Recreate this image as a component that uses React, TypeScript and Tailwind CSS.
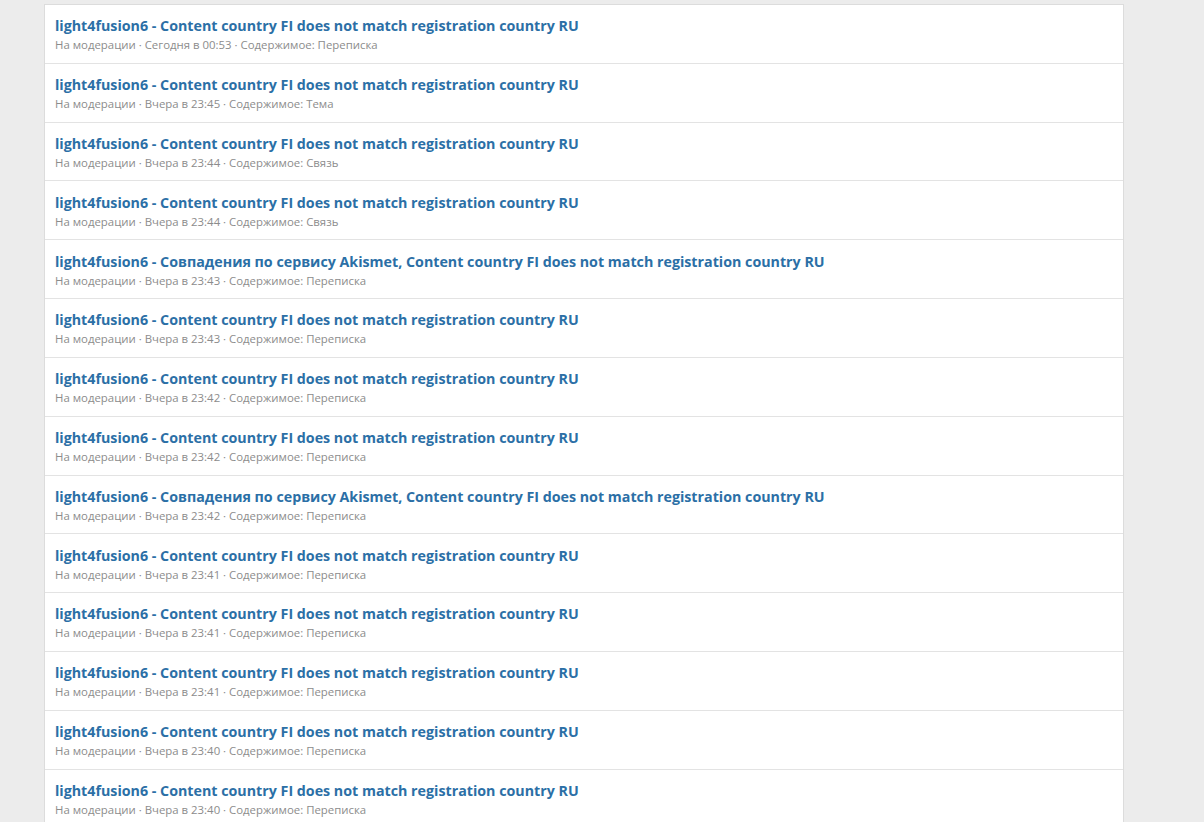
import React from "react";

const A = "Content country FI does not match registration country RU";
const B = "Совпадения по сервису Akismet, Content country FI does not match registration country RU";

const rows: { t: string; d: string; c: string }[] = [
  { t: A, d: "Сегодня в 00:53", c: "Переписка" },
  { t: A, d: "Вчера в 23:45", c: "Тема" },
  { t: A, d: "Вчера в 23:44", c: "Связь" },
  { t: A, d: "Вчера в 23:44", c: "Связь" },
  { t: B, d: "Вчера в 23:43", c: "Переписка" },
  { t: A, d: "Вчера в 23:43", c: "Переписка" },
  { t: A, d: "Вчера в 23:42", c: "Переписка" },
  { t: A, d: "Вчера в 23:42", c: "Переписка" },
  { t: B, d: "Вчера в 23:42", c: "Переписка" },
  { t: A, d: "Вчера в 23:41", c: "Переписка" },
  { t: A, d: "Вчера в 23:41", c: "Переписка" },
  { t: A, d: "Вчера в 23:41", c: "Переписка" },
  { t: A, d: "Вчера в 23:40", c: "Переписка" },
  { t: A, d: "Вчера в 23:40", c: "Переписка" },
];

export default function App() {
  return (
    <div
      className="h-[822px] overflow-hidden bg-[#ececec] pl-[44px] pr-[80px] pt-[4px]"
      style={{ fontFamily: '"Segoe UI", "Open Sans", "Noto Sans", sans-serif' }}
    >
      <div className="border-x border-t border-[#dcdcdc] bg-white">
        {rows.map((r, i) => (
          <div key={i} className="border-b border-[#e3e3e3] px-[10px] pt-[10.3px] pb-[8.53px]">
            <div className="text-[14.25px] font-bold leading-[21px] text-[#2b6fa6]">
              light4fusion6 - {r.t}
            </div>
            <div className="text-[11.4px] leading-[18px] text-[#8c8c8c]">
              На модерации · {r.d} · Содержимое: {r.c}
            </div>
          </div>
        ))}
      </div>
    </div>
  );
}
